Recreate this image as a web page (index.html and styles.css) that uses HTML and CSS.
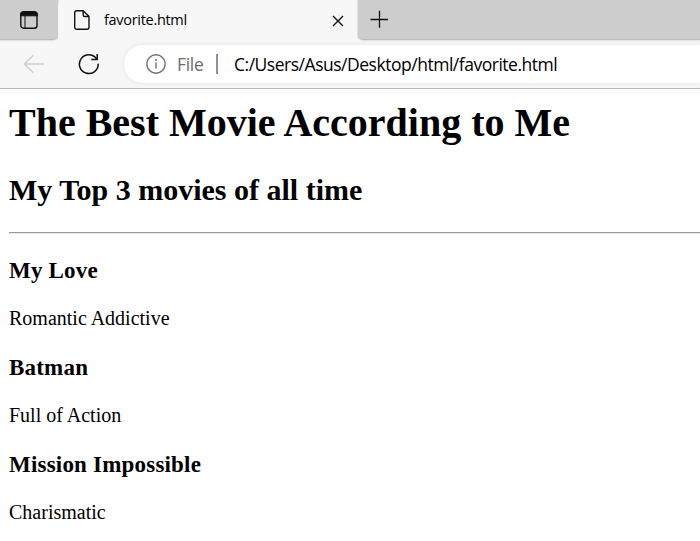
FILE: index.html
```html
<!DOCTYPE html>
<html lang="en">
<head>
<meta charset="utf-8">
<title>favorite.html</title>
<link rel="stylesheet" href="styles.css">
</head>
<body>
<header class="browser">
  <div class="tabstrip">
    <div class="tab-actions">
      <svg width="20" height="20" viewBox="0 0 20 20"><rect x="1.8" y="2.2" width="16.2" height="16" rx="2.8" fill="none" stroke="#111" stroke-width="1.4"/><path d="M1.5 5.8V4.5a3 3 0 0 1 3-3h11a3 3 0 0 1 3 3v1.3zM6 6v12" fill="#111" stroke="#111"/></svg>
    </div>
    <div class="tab">
      <svg class="file-icon" width="18" height="22" viewBox="0 0 18 22" fill="none" stroke="#111" stroke-width="1.4" stroke-linejoin="round"><path d="M3.7 1.7h6.5l5.8 5.8v10.8a2 2 0 0 1-2 2H3.7a2 2 0 0 1-2-2V3.7a2 2 0 0 1 2-2z"/><path d="M10.2 1.7v4.2a1.6 1.6 0 0 0 1.6 1.6H16"/></svg>
      <span class="tab-title">favorite.html</span>
      <svg class="close" width="12" height="12" viewBox="0 0 12 12" stroke="#111" stroke-width="1.4"><path d="M1 1l10 10M11 1L1 11"/></svg>
    </div>
    <div class="strip-end">
      <svg width="18" height="18" viewBox="0 0 18 18" stroke="#111" stroke-width="1.3"><path d="M.5 9.5h17.5M9.5 .8v17"/></svg>
    </div>
  </div>
  <div class="toolbar">
    <svg class="back" width="22" height="20" viewBox="0 0 22 20" fill="none" stroke="#cdcdcd" stroke-width="1.4"><path d="M10.3 1.2L1.5 10l8.8 8.8M1.5 10H21"/></svg>
    <svg class="reload" width="22" height="22" viewBox="0 0 22 22" fill="none" stroke="#111" stroke-width="1.5" stroke-linecap="round"><path d="M20.2 11.2A9.4 9.4 0 1 1 18.4 5.6"/><path d="M19.2 1.8v4.7h-5.2" stroke-linecap="square"/></svg>
    <div class="address">
      <svg class="info" width="22" height="22" viewBox="0 0 22 22" fill="none" stroke="#707070" stroke-width="1.4"><circle cx="11" cy="11" r="9.2"/><path d="M11 9.3v6.2"/><circle cx="11" cy="6.9" r="1" fill="#707070" stroke="none"/></svg>
      <span class="scheme">File</span>
      <span class="divider"></span>
      <span class="url">C:/Users/Asus/Desktop/html/favorite.html</span>
    </div>
  </div>
</header>
<main>
  <h1>The Best Movie According to Me</h1>
  <h2>My Top 3 movies of all time</h2>
  <hr>
  <h3>My Love</h3>
  <p>Romantic Addictive</p>
  <h3>Batman</h3>
  <p>Full of Action</p>
  <h3>Mission Impossible</h3>
  <p>Charismatic</p>
</main>
</body>
</html>
```
FILE: styles.css
```css
* { box-sizing: border-box; }
body {
  margin: 0;
  height: 541px;
  overflow: hidden;
  background: #fff;
  color: #000;
  font-family: "Liberation Serif", serif;
}
svg { display: block; flex: none; }
.browser {
  height: 89px;
  background: #f7f7f7;
  border-bottom: 1px solid #b8b8b8;
  font-family: "Open Sans", "Noto Sans", sans-serif;
}
.tabstrip { display: flex; height: 40px; }
.tab-actions, .strip-end {
  background: #cdcdcd;
  border-bottom: 1px solid #bdbdbd;
}
.tab-actions {
  width: 58px;
  padding: 10px 0 0 19px;
  border-bottom-right-radius: 5px;
  box-shadow: 0 0 2px #aaa;
}
.tab {
  display: flex;
  align-items: center;
  width: 300px;
  padding-left: 15px;
  background: #f7f7f7;
  border-radius: 6px 6px 0 0;
}
.tab-title {
  width: 228px;
  margin-left: 13px;
  font-size: 14.5px;
  letter-spacing: -0.3px;
  line-height: 20px;
}
.close { margin-top: 1px; }
.strip-end {
  flex: 1;
  padding: 10px 0 0 12px;
  border-bottom-left-radius: 5px;
  box-shadow: 0 0 2px #aaa;
}
.toolbar { display: flex; align-items: center; height: 48px; }
.back { margin-left: 23px; }
.reload { margin-left: 33px; }
.address {
  display: flex;
  align-items: center;
  flex: 1;
  height: 38px;
  margin-left: 24px;
  padding-left: 21px;
  background: #fff;
  border-radius: 19px 0 0 19px;
  box-shadow: 0 0 5px #e4e4e4;
  font-size: 17.5px;
  line-height: 24px;
  white-space: nowrap;
}
.scheme { width: 39px; margin-left: 10px; color: #6c6c6c; letter-spacing: -0.3px; }
.divider { width: 2px; height: 20px; background: #929292; }
.url { margin-left: 16px; letter-spacing: -0.48px; }
main { padding: 11px 0 0 9px; }
h1, h2, h3, p { margin: 0; white-space: nowrap; }
h1 { font-size: 40px; line-height: 46px; }
h2 { margin-top: 27px; font-size: 30px; line-height: 34px; }
hr { margin: 25px 0 23px; border: 0; height: 2px; background: #999; border-bottom: 1px solid #ededed; }
h3 { height: 27px; font-size: 23px; letter-spacing: 0.2px; line-height: 27px; }
p { height: 23px; margin: 23px 0 24px; font-size: 20px; line-height: 23px; }
```
